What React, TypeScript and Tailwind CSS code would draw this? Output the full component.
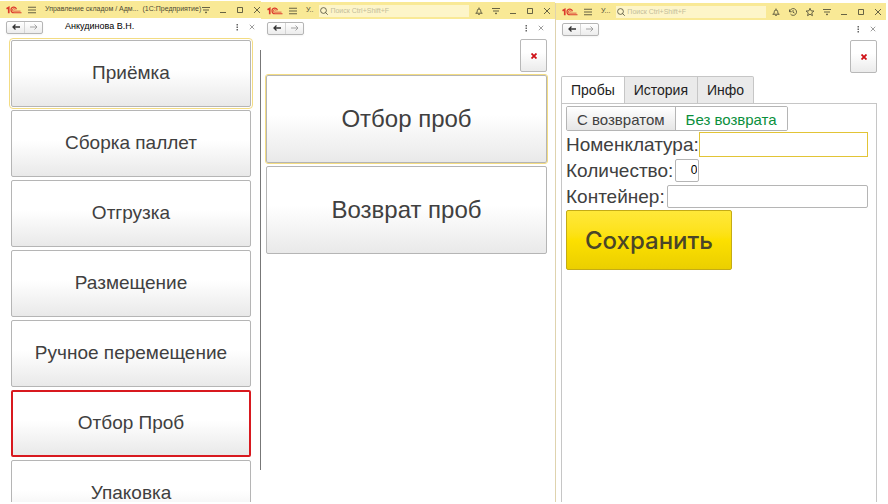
import { useState } from 'react';
import type { ReactNode } from 'react';
import clsx from 'clsx';

const menuItems = [
  'Приёмка',
  'Сборка паллет',
  'Отгрузка',
  'Размещение',
  'Ручное перемещение',
  'Отбор Проб',
  'Упаковка',
];

const tabs = ['Пробы', 'История', 'Инфо'];

const iconPaths = {
  bell: 'M1 12.5h14M3 12.5c1-1.5 1.5-3 1.5-5a3.5 3.5 0 0 1 7 0c0 2 .5 3.5 1.5 5M8 4V1M6.5 15h3',
  history: 'M1 3v4.5h4.5M1.5 7.5a6.8 6.8 0 1 1 1.5 4.7M8 4v4.5l3 1.5',
  star: 'M8 .5l2.2 5.2 5.6.4-4.3 3.7 1.4 5.5L8 12.4l-4.900 2.900 1.400-5.500L.2 6.100l5.600-.4z',
  filter: 'M0 3h16M2 8h12M6 12.5h4M8 12v2.5',
  minimize: 'M2 13h12',
  maximize: 'M3 3h10v10H3z',
  close: 'M2 2l12 12M14 2L2 14',
  menu: 'M0 2.5h16M0 8h16M0 13.5h16',
};

type IconName = keyof typeof iconPaths;

function Icon({ name, className }: { name: IconName; className?: string }) {
  return (
    <svg viewBox="0 0 16 16" className={clsx('shrink-0 overflow-visible', className)} fill="none" stroke="currentColor" strokeWidth="1.7">
      <path d={iconPaths[name]} />
    </svg>
  );
}

function IconButton({ name, label, className }: { name: IconName; label: string; className?: string }) {
  return (
    <button type="button" aria-label={label} className={clsx('shrink-0', className)}>
      <Icon name={name} className="size-2" />
    </button>
  );
}

function Logo() {
  return (
    <svg viewBox="0 0 32 16" className="h-2 w-4 shrink-0" fill="none" stroke="#dc3a2c">
      <path d="M1 5.5L5.5 3V14.5" strokeWidth="3.4" />
      <path d="M21 6.5a5.6 5.6 0 1 0-5.5 7H31" strokeWidth="2.4" />
      <path d="M18 7.5a2.5 2.5 0 1 0-2.5 2.8H29" strokeWidth="1.6" />
    </svg>
  );
}

function Search() {
  return (
    <label className="flex h-3 min-w-0 flex-1 items-center gap-[2px] bg-[#fdf5c9] px-px text-[#4d4a35]">
      <svg viewBox="0 0 16 16" className="size-2 shrink-0" fill="none" stroke="currentColor" strokeWidth="1.6">
        <circle cx="7" cy="7" r="5.8" />
        <path d="M11 11l4.5 4.5" />
      </svg>
      <input
        type="search"
        aria-label="Поиск"
        placeholder="Поиск Ctrl+Shift+F"
        className="min-w-0 flex-1 bg-transparent text-[7px] leading-3 outline-none placeholder:text-[#c3bd9a]"
      />
    </label>
  );
}

function TitleBar({ children, actions, className }: { children: ReactNode; actions: IconName[]; className?: string }) {
  return (
    <header className={clsx('flex h-[17px] shrink-0 items-center bg-[#f9e996] pl-[6px] text-[7px] text-[#4d4a35]', className)}>
      <Logo />
      <IconButton name="menu" label="Меню" className="ml-[6px]" />
      {children}
      <div className="ml-auto flex shrink-0 items-center gap-[9px]">
        {actions.map((name) => (
          <IconButton key={name} name={name} label={name} />
        ))}
      </div>
    </header>
  );
}

function Arrow({ back }: { back?: boolean }) {
  return (
    <svg viewBox="0 0 16 12" className="h-[6px] w-2" fill="none" stroke="currentColor" strokeWidth={back ? 2.6 : 1.8}>
      <path d={back ? 'M16 6H2M7 1L2 6l5 5' : 'M0 6h14M9 1l5 5-5 5'} />
    </svg>
  );
}

function Toolbar({ title, className }: { title?: string; className?: string }) {
  return (
    <div className={clsx('flex h-[18px] shrink-0 items-center pl-[6px]', className)}>
      <div className="flex h-[13px] w-[37px] shrink-0 rounded-xs border border-[#b5b5b5] bg-linear-to-b from-white to-[#ececec] shadow-xs">
        <button type="button" aria-label="Назад" className="flex flex-1 items-center justify-center border-r border-[#d4d4d4] text-[#333]">
          <Arrow back />
        </button>
        <button type="button" aria-label="Вперёд" className="flex flex-1 items-center justify-center text-[#999]">
          <Arrow />
        </button>
      </div>
      {title && <h1 className="ml-[22px] text-[9px] text-black">{title}</h1>}
      <div className="ml-auto flex items-center gap-[7px] text-[#666]">
        <button type="button" aria-label="Ещё">
          <svg viewBox="0 0 16 16" className="size-2" fill="currentColor">
            <path d="M7 2h3v3H7zM7 7h3v3H7zM7 12h3v3H7z" />
          </svg>
        </button>
        <button type="button" aria-label="Закрыть" className="flex w-2 justify-center">
          <Icon name="close" className="size-[6px]" />
        </button>
      </div>
    </div>
  );
}

function CancelButton() {
  return (
    <button
      type="button"
      aria-label="Отмена"
      className="flex h-[33px] w-[27px] shrink-0 items-center justify-center self-end rounded-xs border border-[#b8b8b8] bg-linear-to-b from-white from-40% to-[#ebebeb]"
    >
      <svg viewBox="0 0 12 12" className="size-[6px]" stroke="#cf1016" strokeWidth="3.6">
        <path d="M1 1l10 10M11 1L1 11" />
      </svg>
    </button>
  );
}

function TileButton({ children, className }: { children: ReactNode; className?: string }) {
  return (
    <button
      type="button"
      className={clsx('shrink-0 rounded-xs bg-linear-to-b from-white from-45% to-[#e9e9e9] text-[#404040]', className)}
    >
      {children}
    </button>
  );
}

function MenuWindow() {
  return (
    <section className="flex min-w-0 flex-col overflow-hidden pt-px">
      <TitleBar actions={['filter', 'minimize', 'maximize', 'close']}>
        <span className="ml-[9px] shrink-0 whitespace-nowrap">Управление складом / Адм...</span>
        <span className="ml-1 shrink-0 whitespace-nowrap">(1С:Предприятие)</span>
      </TitleBar>
      <div className="flex min-h-0 flex-1">
        <div className="flex min-w-0 flex-1 flex-col">
          <Toolbar title="Анкудинова В.Н." className="pr-1" />
          <nav className="flex min-h-0 flex-1 flex-col gap-[3px] overflow-hidden pt-1 pr-[9px] pl-[11px]">
            {menuItems.map((item, i) => (
              <TileButton
                key={item}
                className={clsx(
                  'h-[67px] text-[19px]',
                  item === 'Отбор Проб' ? 'border-2 border-[#d8191f]' : 'border border-[#b5b5b5]',
                  i === 0 && 'outline outline-offset-1 outline-[#f3dc83]',
                )}
              >
                {item}
              </TileButton>
            ))}
          </nav>
        </div>
        <div className="flex w-px flex-col pt-8 pb-8">
          <div className="flex-1 bg-[#777]" />
        </div>
      </div>
    </section>
  );
}

function SamplingWindow() {
  return (
    <section className="flex min-w-0 flex-col pt-[2px]">
      <TitleBar actions={['bell', 'filter', 'minimize', 'maximize', 'close']} className="pr-1">
        <span className="mr-[6px] ml-[9px] shrink-0">У..</span>
        <Search />
        <span className="w-[6px] shrink-0" />
      </TitleBar>
      <Toolbar className="pr-[10px]" />
      <div className="flex flex-col gap-[3px] pt-[2px] pr-2 pl-[5px]">
        <CancelButton />
        <TileButton className="h-[88px] border border-[#b5b5b5] text-[24px] outline outline-[#f3dc83]">Отбор проб</TileButton>
        <TileButton className="h-[88px] border border-[#b5b5b5] text-[24px]">Возврат проб</TileButton>
      </div>
    </section>
  );
}

function SampleForm() {
  const [withReturn, setWithReturn] = useState(false);
  const [nomenclature, setNomenclature] = useState('');
  const [quantity, setQuantity] = useState('0');
  const [container, setContainer] = useState('');

  const toggleClass = (active: boolean) =>
    clsx('px-[10px]', active ? 'bg-white text-[#0a8f3c]' : 'bg-linear-to-b from-white to-[#e6e6e6] text-[#404040]');

  return (
    <form
      onSubmit={(e) => e.preventDefault()}
      className="flex min-h-0 flex-1 flex-col items-start gap-px border-x border-t border-[#c6c6c6] pt-[2px] pr-2 pl-1 text-[19px] leading-[25px] text-[#404040]"
    >
      <div className="flex h-[25px] overflow-hidden rounded-xs border border-[#b5b5b5] text-[15px]">
        <button type="button" className={clsx(toggleClass(withReturn), 'border-r border-[#b5b5b5]')} onClick={() => setWithReturn(true)}>
          С возвратом
        </button>
        <button type="button" className={toggleClass(!withReturn)} onClick={() => setWithReturn(false)}>
          Без возврата
        </button>
      </div>
      <div className="flex w-full items-center">
        <label htmlFor="nomenclature">Номенклатура:</label>
        <input
          id="nomenclature"
          value={nomenclature}
          onChange={(e) => setNomenclature(e.target.value)}
          className="h-[25px] min-w-0 flex-1 border border-[#e2c436] bg-white px-1 text-[13px] outline-none"
        />
      </div>
      <div className="flex items-center gap-[2px]">
        <label htmlFor="quantity">Количество:</label>
        <input
          id="quantity"
          inputMode="numeric"
          value={quantity}
          onChange={(e) => setQuantity(e.target.value)}
          className="h-[23px] w-6 rounded-xs border border-[#b5b5b5] bg-white pr-px text-right text-[12px] text-black outline-none"
        />
      </div>
      <div className="flex w-full items-center gap-[2px]">
        <label htmlFor="container">Контейнер:</label>
        <input
          id="container"
          value={container}
          onChange={(e) => setContainer(e.target.value)}
          className="h-[23px] min-w-0 flex-1 rounded-xs border border-[#b5b5b5] bg-white px-1 text-[13px] outline-none"
        />
      </div>
      <button
        type="submit"
        className="h-[60px] rounded-xs border border-[#c4ab16] bg-linear-to-b from-[#ffe838] via-[#fce000] to-[#ebcf00] px-[18px] font-[Inter,sans-serif] text-[24px] font-medium text-[#4a4628]"
      >
        Сохранить
      </button>
    </form>
  );
}

function FormWindow() {
  const [activeTab, setActiveTab] = useState('Пробы');

  return (
    <section className="flex min-w-0 flex-col pt-[3px]">
      <div className="flex min-h-0 flex-1 flex-col border-l border-[#dfd3ae]">
        <TitleBar actions={['bell', 'history', 'star', 'filter', 'minimize', 'maximize', 'close']} className="pr-1">
          <span className="mr-[6px] ml-[9px] shrink-0">У...</span>
          <Search />
          <span className="w-[6px] shrink-0" />
        </TitleBar>
        <Toolbar className="pr-[9px]" />
        <div className="flex min-h-0 flex-1 flex-col pt-[2px] pr-[9px] pl-[5px]">
          <CancelButton />
          <div role="tablist" className="mt-[3px] -mb-px flex text-[14px]">
            {tabs.map((tab) => (
              <button
                key={tab}
                type="button"
                role="tab"
                aria-selected={tab === activeTab}
                onClick={() => setActiveTab(tab)}
                className={clsx(
                  'h-7 border-t border-r border-[#c6c6c6] px-[9px] text-[#222] first:rounded-tl-xs first:border-l last:rounded-tr-xs',
                  tab === activeTab ? 'bg-white' : 'border-b bg-[#eaeaea]',
                )}
              >
                {tab}
              </button>
            ))}
          </div>
          <SampleForm />
        </div>
      </div>
    </section>
  );
}

export default function App() {
  return (
    <main className="grid h-screen grid-cols-[261fr_294fr_331fr] grid-rows-[minmax(0,1fr)] overflow-hidden bg-white pr-[2px] pb-[2px] font-['Liberation_Sans',Arial,sans-serif]">
      <MenuWindow />
      <SamplingWindow />
      <FormWindow />
    </main>
  );
}
